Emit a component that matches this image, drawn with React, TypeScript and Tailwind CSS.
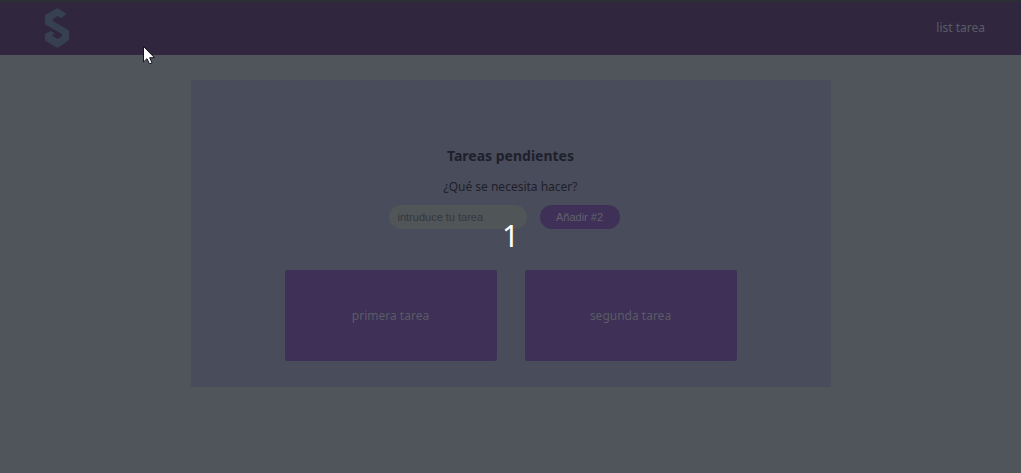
import { useState } from "react";

const tasks = ["primera tarea", "segunda tarea"];

function Logo() {
  return (
    <svg viewBox="0 0 24 40" className="h-10 w-6" fill="#36404e" aria-hidden="true">
      <path d="M12.5 0 L21.5 6 L16 10 L12.5 8 L8 11 V13 L24 22.5 V32 L12.5 40 L0 32.5 V26 L5.5 23 L9.5 25 L7 27.5 L12.5 31 L17 28 V26 L0 16.5 V7 Z" />
    </svg>
  );
}

function Pointer() {
  return (
    <svg
      viewBox="0 0 14 21"
      className="pointer-events-none absolute top-[45px] left-[142px] h-[21px] w-[14px]"
      aria-hidden="true"
    >
      <path
        d="M1.5 1.5 V17 L5 13.7 L7.5 19 L10 17.8 L7.7 12.7 H12.5 Z"
        fill="#ffffff"
        stroke="#17141f"
        strokeWidth="1"
      />
    </svg>
  );
}

export default function App() {
  const [text, setText] = useState("");

  return (
    <div className="relative min-h-screen bg-[#50555c] font-['Noto_Sans','Open_Sans',sans-serif] text-xs">
      <header className="flex h-[55px] items-center justify-between border-t-2 border-[#2b2e32] bg-[#30273f] pr-9 pb-px pl-[45px]">
        <a href="#inicio" aria-label="Inicio">
          <Logo />
        </a>
        <nav>
          <a href="#tareas" className="text-[#5a5c64]">
            list tarea
          </a>
        </nav>
      </header>

      <main className="mx-auto mt-[25px] flex max-w-[640px] flex-col items-center bg-[#494c5a] px-6 pt-[66px] pb-[26px]">
        <h1 className="text-sm leading-5 font-bold text-[#1f202b]">Tareas pendientes</h1>
        <label htmlFor="tarea" className="mt-[11px] leading-5 text-[#1f202b]">
          ¿Qué se necesita hacer?
        </label>
        <form
          className="mt-2 flex gap-[13px] pr-[13px] font-['Liberation_Sans',sans-serif] text-[11px]"
          onSubmit={(e) => e.preventDefault()}
        >
          <input
            id="tarea"
            type="text"
            value={text}
            onChange={(e) => setText(e.target.value)}
            placeholder="intruduce tu tarea"
            className="h-6 w-[138px] rounded-full bg-[#505558] px-[9px] text-[#1f202b] outline-none placeholder:text-[#34373e]"
          />
          <button type="submit" className="h-6 w-20 rounded-full bg-[#3e3057] text-[#62616e]">
            Añadir #2
          </button>
        </form>
        <ul className="mt-[41px] flex flex-wrap justify-center gap-7">
          {tasks.map((task) => (
            <li
              key={task}
              className="flex h-[91px] w-[212px] items-center justify-center rounded-xs bg-[#3e3057] pt-px text-[#5a5c64]"
            >
              {task}
            </li>
          ))}
        </ul>
      </main>

      <div className="pointer-events-none absolute inset-x-0 top-[216px] text-center text-[30px] leading-10 text-white">
        1
      </div>
      <Pointer />
    </div>
  );
}
